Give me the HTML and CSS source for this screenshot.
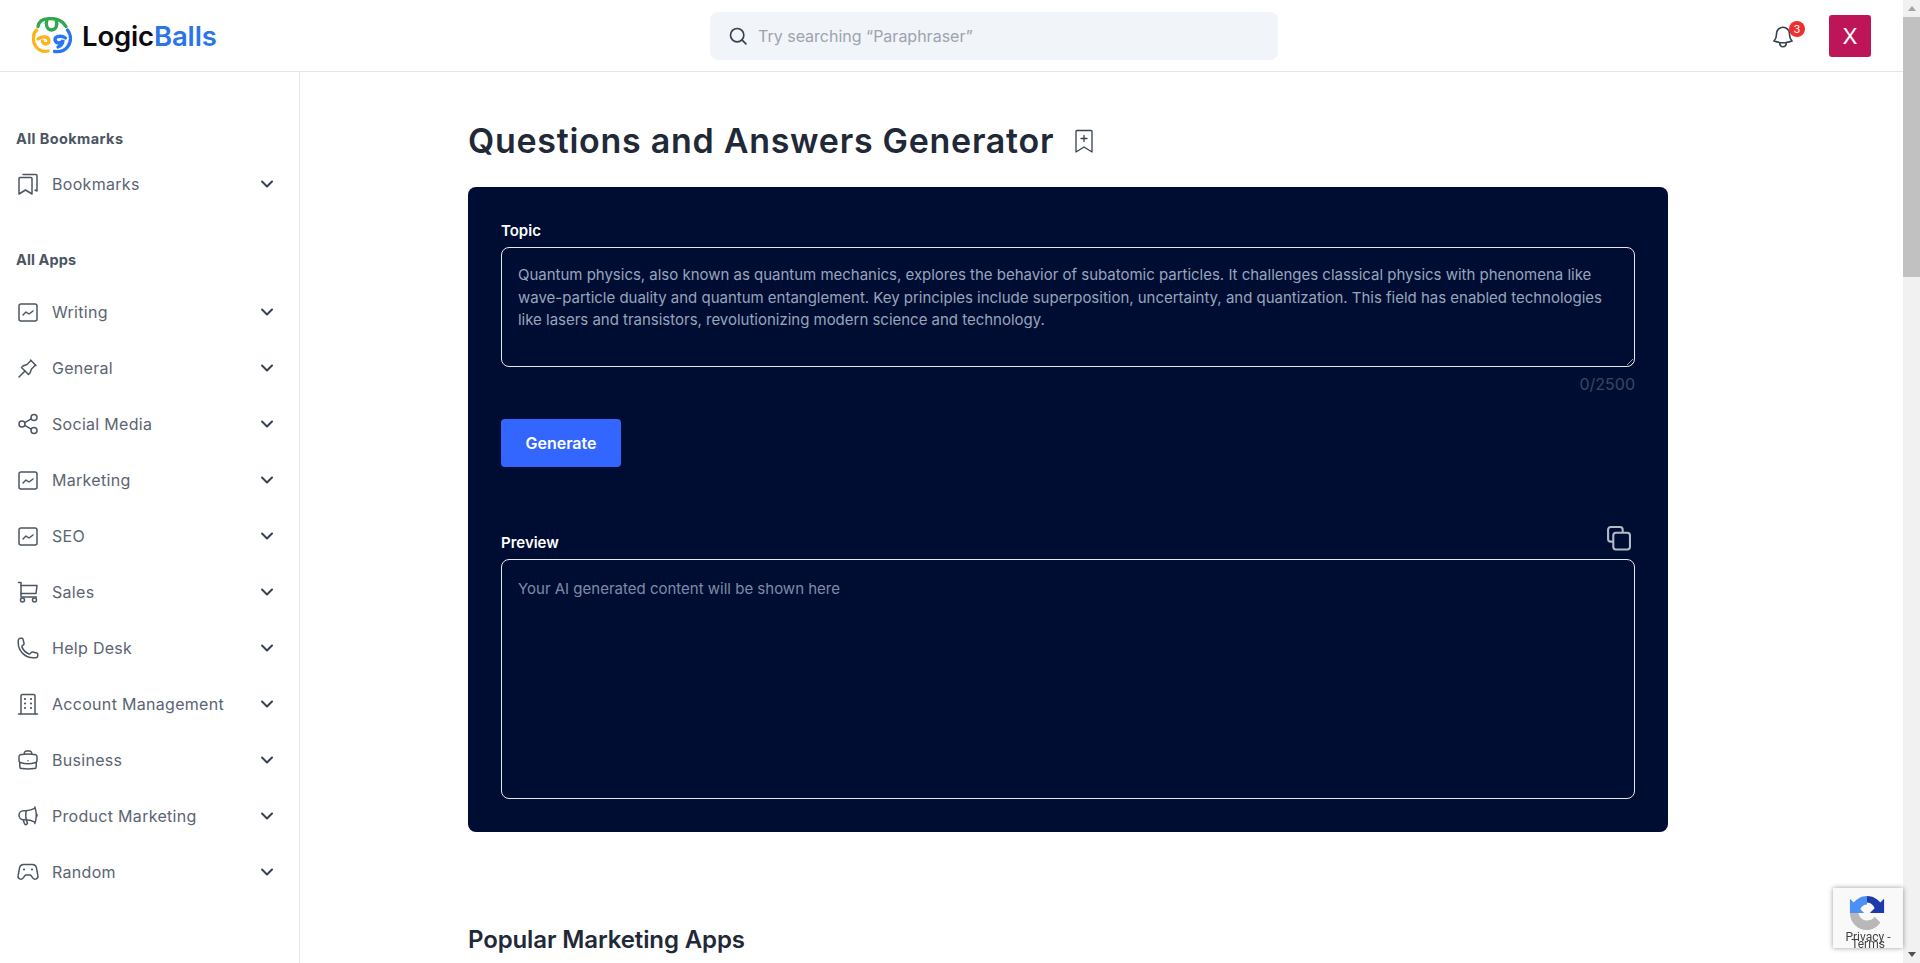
FILE: index.html
```html
<!DOCTYPE html>
<html lang="en">
<head>
<meta charset="utf-8">
<title>Questions and Answers Generator</title>
<link rel="stylesheet" href="styles.css">
</head>
<body>
<svg class="sprite" xmlns="http://www.w3.org/2000/svg">
  <symbol id="i-chart" viewBox="0 0 24 24"><rect x="3" y="4" width="18" height="17" rx="2"/><path d="M7 15l3-3 3 2 4-3"/></symbol>
  <symbol id="i-chev" viewBox="0 0 20 20"><path d="M5 7.5l5 5 5-5"/></symbol>
  <symbol id="i-marks" viewBox="0 0 24 24"><path d="M3 6.5a1 1 0 0 1 1-1h11a1 1 0 0 1 1 1V22l-6.500-4L3 22Z"/><path d="M7 2.500h13a1 1 0 0 1 1 1V19l-2-1"/></symbol>
  <symbol id="i-pin" viewBox="0 0 24 24"><path d="M15 4.5l-4 4-4 1.5-1.500 1.500 7 7 1.500-1.500 1.500-4 4-4"/><path d="M9 15l-6 6"/><path d="M14.500 4l5.500 5.500"/></symbol>
  <symbol id="i-share" viewBox="0 0 24 24"><circle cx="6" cy="12" r="3"/><circle cx="18" cy="5.500" r="3"/><circle cx="18" cy="18.500" r="3"/><path d="M8.700 10.600l6.600-3.700M8.700 13.400l6.600 3.700"/></symbol>
  <symbol id="i-cart" viewBox="0 0 24 24"><path d="M2.500 2.500H5V17h15.500"/><path d="M5 5.500h16l-1 8H5"/><circle cx="6.500" cy="20" r="2"/><circle cx="18.500" cy="20" r="2"/></symbol>
  <symbol id="i-phone" viewBox="0 0 24 24"><path d="M2.250 6.750c0 8.284 6.716 15 15 15h2.250a2.250 2.250 0 0 0 2.250-2.250v-1.372c0-.516-.351-.966-.852-1.091l-4.423-1.106c-.44-.11-.902.055-1.173.417l-.97 1.293c-.282.376-.769.542-1.210.38a12.035 12.035 0 0 1-7.143-7.143c-.162-.441.004-.928.38-1.210l1.293-.97c.363-.271.527-.734.417-1.173L6.963 3.102a1.125 1.125 0 0 0-1.091-.852H4.500A2.250 2.250 0 0 0 2.250 4.500v2.250Z"/></symbol>
  <symbol id="i-office" viewBox="0 0 24 24"><path d="M2.500 22h19"/><path d="M5 22V4a1.500 1.500 0 0 1 1.500-1.500h11A1.500 1.500 0 0 1 19 4v18"/><path d="M9 7h.01M15 7h.01M9 11.500h.01M15 11.500h.01M9 16h.01M15 16h.01" class="dots"/></symbol>
  <symbol id="i-brief" viewBox="0 0 24 24"><path d="M20.250 14.150v4.250c0 1.094-.787 2.036-1.872 2.180-2.087.277-4.216.42-6.378.42s-4.291-.143-6.378-.42c-1.085-.144-1.872-1.086-1.872-2.180v-4.250m16.500 0a2.180 2.180 0 0 0 .75-1.661V8.706c0-1.081-.768-2.015-1.837-2.175a48.114 48.114 0 0 0-3.413-.387m4.500 8.006c-.194.165-.42.295-.673.38A23.978 23.978 0 0 1 12 15.750c-2.648 0-5.195-.429-7.577-1.220a2.016 2.016 0 0 1-.673-.38m0 0A2.180 2.180 0 0 1 3 12.489V8.706c0-1.081.768-2.015 1.837-2.175a48.111 48.111 0 0 1 3.413-.387m7.500 0V5.250A2.250 2.250 0 0 0 13.500 3h-3a2.250 2.250 0 0 0-2.250 2.250v.894m7.500 0a48.667 48.667 0 0 0-7.500 0M12 12.750h.008v.008H12v-.008Z"/></symbol>
  <symbol id="i-mega" viewBox="0 0 24 24"><path d="M10.340 15.840c-.688-.06-1.386-.09-2.090-.09H7.500a4.500 4.500 0 1 1 0-9h.75c.704 0 1.402-.03 2.090-.09m0 9.180c.253.962.584 1.892.985 2.783.247.55.06 1.210-.463 1.511l-.657.38c-.551.318-1.260.117-1.527-.461a20.845 20.845 0 0 1-1.440-4.282m3.102.069a18.030 18.030 0 0 1-.59-4.590c0-1.586.205-3.124.59-4.590m0 9.180a23.848 23.848 0 0 1 8.835 2.535M10.340 6.660a23.847 23.847 0 0 0 8.835-2.535m0 0A23.740 23.740 0 0 0 18.795 3m.38 1.125a23.910 23.910 0 0 1 1.014 5.395m-1.014 8.855c-.118.38-.245.754-.38 1.125m.38-1.125a23.910 23.910 0 0 0 1.014-5.395m0-3.460c.495.413.811 1.035.811 1.730 0 .695-.316 1.317-.811 1.730m0-3.460a24.347 24.347 0 0 1 0 3.460"/></symbol>
  <symbol id="i-game" viewBox="0 0 24 24"><path d="M7.500 4.500h9a4 4 0 0 1 3.900 3.200l1.500 8a2.800 2.800 0 0 1-4.900 2.400L14.500 15h-5L7 18.100a2.800 2.800 0 0 1-4.900-2.400l1.500-8a4 4 0 0 1 3.900-3.200Z"/><path d="M8 9.500h.01M16 9.500h.01" class="dots"/></symbol>
</svg>

<div class="app">
  <div class="page">
    <header class="topbar">
      <a class="brand">
        <svg class="brand-mark" viewBox="0 0 40 37" fill="none" stroke-width="3.300" stroke-linecap="round">
          <path stroke="#2fa84f" d="M6 9.500C7 4 11 2 15 1.800c6-.8 14-.8 19 7.700"/>
          <path stroke="#2fa84f" d="M15 3c-2 4 0 10 4.500 10S26 8 24 3"/>
          <path stroke="#fbb41a" d="M4.500 13C.5 17 .5 24 3.500 29c2.500 4 7 6 12.500 5"/>
          <path stroke="#fbb41a" d="M6 22c4-3 11-3 11 2 0 4-6.500 4-6.500 0"/>
          <path stroke="#2a75f3" d="M35.500 13c4 5 4 12 0 17-3 4-8 5-13 4.500"/>
          <path stroke="#2a75f3" d="M33.500 21c-4-3-11-2-10.500 2 1 4 7 4 8 0 0 4-2 6-5 7"/>
        </svg>
        <span class="brand-name">Logic<span class="brand-accent">Balls</span></span>
      </a>
      <div class="search">
        <svg class="search-icon" viewBox="0 0 24 24" fill="none" stroke="#374151" stroke-width="2" stroke-linecap="round"><circle cx="11" cy="11" r="8"/><path d="M17 17l4.500 4.500"/></svg>
        <span class="search-text">Try searching “Paraphraser”</span>
      </div>
      <div class="top-actions">
        <div class="bell">
          <svg class="bell-icon" viewBox="0 0 24 24" fill="none" stroke="#374151" stroke-width="1.500" stroke-linecap="round" stroke-linejoin="round"><path d="M14.857 17.082a23.848 23.848 0 0 0 5.454-1.310A8.967 8.967 0 0 1 18 9.750V9A6 6 0 0 0 6 9v.75a8.967 8.967 0 0 1-2.312 6.022c1.733.64 3.560 1.085 5.455 1.310m5.714 0a24.255 24.255 0 0 1-5.714 0m5.714 0a3 3 0 1 1-5.714 0"/></svg>
          <span class="badge">3</span>
        </div>
        <div class="avatar">X</div>
      </div>
    </header>

    <div class="body">
      <aside class="sidebar">
        <h4 class="side-head">All Bookmarks</h4>
        <ul class="side-list side-list-marks">
          <li class="side-item"><svg class="ico"><use href="#i-marks"/></svg><span class="side-label">Bookmarks</span><svg class="chev"><use href="#i-chev"/></svg></li>
        </ul>
        <h4 class="side-head side-head-apps">All Apps</h4>
        <ul class="side-list side-list-apps">
          <li class="side-item"><svg class="ico"><use href="#i-chart"/></svg><span class="side-label">Writing</span><svg class="chev"><use href="#i-chev"/></svg></li>
          <li class="side-item"><svg class="ico"><use href="#i-pin"/></svg><span class="side-label">General</span><svg class="chev"><use href="#i-chev"/></svg></li>
          <li class="side-item"><svg class="ico"><use href="#i-share"/></svg><span class="side-label">Social Media</span><svg class="chev"><use href="#i-chev"/></svg></li>
          <li class="side-item"><svg class="ico"><use href="#i-chart"/></svg><span class="side-label">Marketing</span><svg class="chev"><use href="#i-chev"/></svg></li>
          <li class="side-item"><svg class="ico"><use href="#i-chart"/></svg><span class="side-label">SEO</span><svg class="chev"><use href="#i-chev"/></svg></li>
          <li class="side-item"><svg class="ico"><use href="#i-cart"/></svg><span class="side-label">Sales</span><svg class="chev"><use href="#i-chev"/></svg></li>
          <li class="side-item"><svg class="ico"><use href="#i-phone"/></svg><span class="side-label">Help Desk</span><svg class="chev"><use href="#i-chev"/></svg></li>
          <li class="side-item"><svg class="ico"><use href="#i-office"/></svg><span class="side-label">Account Management</span><svg class="chev"><use href="#i-chev"/></svg></li>
          <li class="side-item"><svg class="ico"><use href="#i-brief"/></svg><span class="side-label">Business</span><svg class="chev"><use href="#i-chev"/></svg></li>
          <li class="side-item"><svg class="ico"><use href="#i-mega"/></svg><span class="side-label">Product Marketing</span><svg class="chev"><use href="#i-chev"/></svg></li>
          <li class="side-item"><svg class="ico"><use href="#i-game"/></svg><span class="side-label">Random</span><svg class="chev"><use href="#i-chev"/></svg></li>
        </ul>
      </aside>

      <main class="main">
        <div class="title-row">
          <h1 class="title">Questions and Answers Generator</h1>
          <svg class="title-mark" viewBox="0 0 20 24" fill="none" stroke="#374151" stroke-width="1.300" stroke-linejoin="round" stroke-linecap="round"><path d="M2 2.500a1 1 0 0 1 1-1h14a1 1 0 0 1 1 1V23l-8-5-8 5Z"/><path d="M10 6.500v6M7 9.500h6"/></svg>
        </div>

        <section class="panel">
          <label class="field-label">Topic</label>
          <textarea class="topic" spellcheck="false">Quantum physics, also known as quantum mechanics, explores the behavior of subatomic particles. It challenges classical physics with phenomena like wave-particle duality and quantum entanglement. Key principles include superposition, uncertainty, and quantization. This field has enabled technologies like lasers and transistors, revolutionizing modern science and technology.</textarea>
          <div class="counter">0/2500</div>
          <button class="generate">Generate</button>
          <div class="preview-head">
            <label class="field-label field-label-flush">Preview</label>
            <svg class="copy" viewBox="0 0 24 24" fill="none" stroke="#b4b9c6" stroke-width="2"><path d="M16 6V3.500A2.500 2.500 0 0 0 13.500 1h-9A2.500 2.500 0 0 0 2 3.500v9A2.500 2.500 0 0 0 4.500 15H7"/><rect x="7" y="6.500" width="16" height="16" rx="2.500"/></svg>
          </div>
          <div class="preview">Your AI generated content will be shown here</div>
        </section>

        <h2 class="section-title">Popular Marketing Apps</h2>
      </main>
    </div>
  </div>

  <div class="scrollbar">
    <span class="sb-arrow sb-up"></span>
    <div class="sb-track"><div class="sb-thumb"></div></div>
    <span class="sb-arrow sb-down"></span>
  </div>

  <div class="recaptcha">
    <svg class="rc-logo" viewBox="0 0 40 40">
      <path fill="#b8b8b8" d="M2 20h9c1 5 5 8 9 8 3 0 6-1 8-4l6 6c-3 5-9 8-14 8C10 38 2 30 2 20Z"/>
      <path fill="#4a90f5" d="M20 2C14 2 9 5 6 9L2 5v15h15l-4-4c1-3 4-5 7-5Z"/>
      <path fill="#1c3aa9" d="M20 2c6 0 11 3 14 7l4-4v15H23l5-5c-1-3-4-6-8-6Z"/>
    </svg>
    <div class="rc-text">Privacy -<br>Terms</div>
  </div>
</div>
</body>
</html>
```

FILE: styles.css
```css
* { box-sizing: border-box; }
html, body { margin: 0; height: 100%; overflow: hidden; background: #fff; }
body { font-family: Inter, "Liberation Sans", sans-serif; color: #1f2937; }
.sprite { display: none; }

.app { display: flex; height: 963px; }
.page { flex: 1; min-width: 0; display: flex; flex-direction: column; }

/* Top bar */
.topbar { height: 72px; flex: none; display: flex; align-items: center; border-bottom: 1px solid #e5e7eb; }
.brand { width: 710px; flex: none; display: flex; align-items: center; padding-left: 32px; }
.brand-mark { width: 40px; height: 37px; flex: none; }
.brand-name { margin-left: 10px; font-size: 27.500px; font-weight: 600; color: #0b0b0f; letter-spacing: -.15px; }
.brand-accent { color: #2a75e8; }
.search { width: 568px; height: 48px; flex: none; display: flex; align-items: center; background: #f1f4f9; border-radius: 8px; padding-left: 18px; }
.search-icon { width: 20px; height: 20px; flex: none; }
.search-text { margin-left: 10px; font-size: 16px; color: #9ca3af; }
.top-actions { flex: 1; display: flex; align-items: center; justify-content: flex-end; padding-right: 32px; }
.bell { position: relative; width: 24px; height: 24px; margin-right: 35px; }
.bell-icon { width: 26px; height: 26px; display: block; }
.badge { position: absolute; top: -3px; left: 19px; width: 16px; height: 16px; border-radius: 50%; background: #ef2f2f; color: #fff; font-size: 11px; line-height: 16px; text-align: center; }
.avatar { width: 42px; height: 42px; background: #be1558; border-radius: 3px; color: #fff; font-size: 22px; display: flex; align-items: center; justify-content: center; }

/* Body */
.body { flex: 1; min-height: 0; display: flex; }
.sidebar { width: 300px; flex: none; border-right: 1px solid #e5e7eb; padding: 56px 0 0 16px; }
.side-head { margin: 0; font-family: Inter, sans-serif; font-size: 14.500px; line-height: 22px; font-weight: 700; color: #4b5563; letter-spacing: .4px; }
.side-head-apps { margin-top: 42px; letter-spacing: .1px; }
.side-list { list-style: none; margin: 0; padding: 0; }
.side-list-marks { margin-top: 11px; }
.side-list-apps { margin-top: 13px; }
.side-item { height: 56px; display: flex; align-items: center; padding-right: 22px; color: #5b6472; }
.side-list-marks .side-item { height: 46px; }
.ico { width: 24px; height: 24px; flex: none; fill: none; stroke: #4b5563; stroke-width: 1.500; stroke-linecap: round; stroke-linejoin: round; }
.dots { stroke-width: 2.200; }
.side-label { margin-left: 12px; flex: 1; font-size: 16px; letter-spacing: .3px; }
.chev { width: 20px; height: 20px; flex: none; fill: none; stroke: #374151; stroke-width: 2; stroke-linecap: round; stroke-linejoin: round; }

/* Main */
.main { flex: 1; min-width: 0; padding-left: 168px; overflow: hidden; }
.title-row { display: flex; align-items: center; height: 115px; padding-top: 23px; width: 1200px; }
.title { margin: 0; font-size: 34px; line-height: 44px; font-weight: 600; color: #1f2937; letter-spacing: .72px; }
.title-mark { width: 20px; height: 24px; margin-left: 20px; flex: none; }
.panel { width: 1200px; height: 645px; background: #000d33; border-radius: 8px; padding: 34px 33px 33px; display: flex; flex-direction: column; align-items: stretch; }
.field-label { color: #fff; font-size: 15px; font-weight: 600; line-height: 20px; margin-bottom: 6px; display: block; }
.field-label-flush { margin-bottom: -1px; }
.topic { display: block; width: 100%; height: 120px; flex: none; background: transparent; border: 1px solid #e5e7eb; border-radius: 8px; padding: 16px; font: 15px/22.500px Inter, sans-serif; letter-spacing: -.015px; color: #98a4bb; resize: vertical; outline: 0; }
.counter { text-align: right; font-size: 16px; line-height: 24px; color: #3b4560; margin-top: 5px; }
.generate { align-self: flex-start; margin-top: 23px; width: 120px; height: 48px; background: #3366ff; color: #fff; border: 0; border-radius: 4px; font: 600 16px Inter, sans-serif; }
.preview-head { display: flex; align-items: flex-end; justify-content: space-between; margin-top: 59px; height: 26px; padding-right: 4px; margin-bottom: 7px; }
.copy { width: 25px; height: 25px; margin-bottom: 1px; }
.preview { height: 240px; flex: none; border: 1px solid #e5e7eb; border-radius: 8px; padding: 18px 16px 16px; font-size: 15px; line-height: 22.500px; color: #7f8ba6; }
.section-title { margin: 92px 0 0; font-size: 24px; line-height: 32px; font-weight: 600; color: #1f2937; letter-spacing: -.12px; }

/* Scrollbar */
.scrollbar { width: 17px; flex: none; background: #f1f1f1; display: flex; flex-direction: column; }
.sb-arrow { height: 17px; flex: none; display: flex; align-items: center; justify-content: center; }
.sb-arrow::before { content: ""; border-left: 4px solid transparent; border-right: 4px solid transparent; }
.sb-up::before { border-bottom: 5px solid #a3a3a3; }
.sb-down::before { border-top: 5px solid #505050; }
.sb-track { flex: 1; }
.sb-thumb { height: 260px; background: #c1c1c1; }

/* reCAPTCHA badge */
.recaptcha { position: fixed; left: 1833px; top: 888px; width: 70px; height: 60px; background: #f9f9f9; box-shadow: 0 0 5px rgba(0,0,0,.4); }
.rc-logo { position: absolute; left: 15px; top: 6px; width: 38px; height: 38px; }
.rc-text { position: absolute; left: 0; right: 0; top: 46px; text-align: center; font: 12px/7px Roboto, "Liberation Sans", sans-serif; color: #444; }
```
